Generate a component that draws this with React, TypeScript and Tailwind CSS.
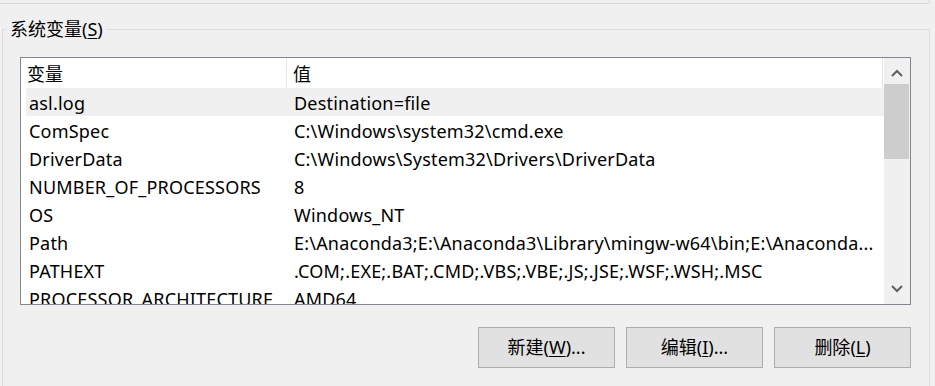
import React from 'react';

const rows: [string, string][] = [
  ['asl.log', 'Destination=file'],
  ['ComSpec', 'C:\\Windows\\system32\\cmd.exe'],
  ['DriverData', 'C:\\Windows\\System32\\Drivers\\DriverData'],
  ['NUMBER_OF_PROCESSORS', '8'],
  ['OS', 'Windows_NT'],
  ['Path', 'E:\\Anaconda3;E:\\Anaconda3\\Library\\mingw-w64\\bin;E:\\Anaconda...'],
  ['PATHEXT', '.COM;.EXE;.BAT;.CMD;.VBS;.VBE;.JS;.JSE;.WSF;.WSH;.MSC'],
  ['PROCESSOR_ARCHITECTURE', 'AMD64'],
];

function Chevron({ down }: { down?: boolean }) {
  return (
    <svg width="12" height="8" viewBox="0 0 12 8" className={down ? 'rotate-180' : ''}>
      <path d="M1 7 L6 2 L11 7" fill="none" stroke="#606060" strokeWidth="2" />
    </svg>
  );
}

function Button({ label, hotkey, tail }: { label: string; hotkey: string; tail: string }) {
  return (
    <button className="w-[137px] h-[41px] bg-[#e1e1e1] border border-[#adadad] text-[18px] text-black">
      {label}(<span className="underline underline-offset-2">{hotkey}</span>){tail}
    </button>
  );
}

export default function App() {
  return (
    <div
      className="w-[935px] h-[386px] bg-[#f0f0f0] overflow-hidden text-black"
      style={{ fontFamily: '"Noto Sans", "Noto Sans CJK SC", sans-serif' }}
    >
      <div className="w-[930px] h-[4px] border-b border-r border-[#dcdcdc]" />

      <fieldset className="ml-[2px] mt-[13px] w-[928px] h-[420px] border border-[#dcdcdc] pl-[17px] pt-[16px]">
        <legend className="ml-[-13px] px-[3px] text-[18px] leading-[24px]">
          系统变量(<span className="underline underline-offset-2">S</span>)
        </legend>

        <div className="w-[891px] h-[248px] border border-[#828790] bg-white flex overflow-hidden">
          <div className="flex-1 flex flex-col">
            <div className="h-[30px] shrink-0 flex items-center text-[18px] border-r border-[#e5e5e5] mr-[1px]">
              <div className="w-[266px] h-full pl-[6px] pt-[3px] flex items-center border-r border-[#e5e5e5]">变量</div>
              <div className="pl-[6px] pt-[3px]">值</div>
            </div>
            {rows.map(([name, value], i) => (
              <div
                key={name}
                className={`h-[28px] shrink-0 ml-[5px] pt-[2px] flex items-center text-[18px] tracking-[0.2px] whitespace-nowrap ${
                  i === 0 ? 'bg-[#f0f0f0]' : ''
                }`}
              >
                <div className="w-[261px] pl-[3px] overflow-hidden">{name}</div>
                <div className="pl-[7px] overflow-hidden">{value}</div>
              </div>
            ))}
          </div>

          <div className="w-[26px] bg-[#f0f0f0] flex flex-col items-center">
            <div className="h-[26px] w-full pt-[4px] flex items-center justify-center">
              <Chevron />
            </div>
            <div className="w-[25px] mr-[1px] h-[75px] bg-[#cdcdcd]" />
            <div className="flex-1" />
            <div className="h-[30px] w-full pb-[1px] flex items-center justify-center">
              <Chevron down />
            </div>
          </div>
        </div>

        <div className="w-[891px] mt-[22px] flex justify-end gap-[11px]">
          <Button label="新建" hotkey="W" tail="..." />
          <Button label="编辑" hotkey="I" tail="..." />
          <Button label="删除" hotkey="L" tail="" />
        </div>
      </fieldset>
    </div>
  );
}
